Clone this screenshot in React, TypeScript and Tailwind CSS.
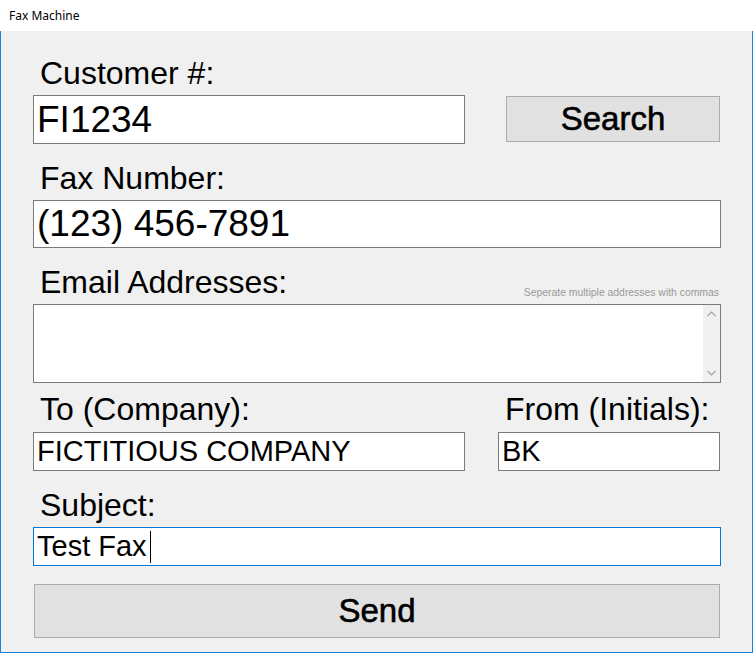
import React from "react";

const F = { fontFamily: '"Liberation Sans", Arial, sans-serif' };

function Label({ children }: { children: React.ReactNode }) {
  return (
    <div className="pl-[7px] text-[32px] leading-[32px] text-black whitespace-nowrap">
      {children}
    </div>
  );
}

export default function App() {
  return (
    <div className="w-[753px] h-[653px] flex flex-col bg-white overflow-hidden" style={F}>
      <div className="h-[31px] shrink-0 bg-white flex items-center pl-[9px]">
        <span className="text-[12px] text-black" style={{ fontFamily: '"Noto Sans", "Open Sans", sans-serif' }}>
          Fax Machine
        </span>
      </div>
      <div className="flex-1 bg-[#f0f0f0] border-l border-r border-b border-[#1883d7] pl-[32px] pr-[31px] flex flex-col">
        <div className="mt-[26px]">
          <Label>Customer #:</Label>
        </div>
        <div className="mt-[6px] flex items-start">
          <div className="w-[432px] h-[49px] bg-white border border-[#7a7a7a] flex items-center pl-[3px] text-[37px] text-black">
            FI1234
          </div>
          <button className="ml-[41px] mt-[1px] w-[214px] h-[46px] bg-[#e1e1e1] border border-[#adadad] flex items-center justify-center text-[33px] [-webkit-text-stroke:0.6px_black] text-black">
            Search
          </button>
        </div>

        <div className="mt-[18px]">
          <Label>Fax Number:</Label>
        </div>
        <div className="mt-[6px] h-[48px] bg-white border border-[#7a7a7a] flex items-center pl-[3px] text-[37px] text-black">
          (123) 456-7891
        </div>

        <div className="mt-[18px] h-[32px] flex justify-between items-start">
          <Label>Email Addresses:</Label>
          <div className="mt-[21px] mr-[2px] text-[10.4px] leading-[12px] text-[#999999] whitespace-nowrap">
            Seperate multiple addresses with commas
          </div>
        </div>
        <div className="mt-[6px] h-[79px] bg-white border border-[#7a7a7a] flex justify-end">
          <div className="w-[17px] h-full bg-[#f0f0f0] flex flex-col justify-between items-center py-[6px]">
            <svg width="9" height="6" viewBox="0 0 9 6">
              <path d="M0.5 5 L4.5 1 L8.5 5" fill="none" stroke="#a3a3a3" strokeWidth="1.2" />
            </svg>
            <svg width="9" height="6" viewBox="0 0 9 6">
              <path d="M0.5 1 L4.5 5 L8.5 1" fill="none" stroke="#a3a3a3" strokeWidth="1.2" />
            </svg>
          </div>
        </div>

        <div className="mt-[10px] flex">
          <div className="w-[432px]">
            <Label>To (Company):</Label>
          </div>
          <div className="ml-[33px] w-[222px]">
            <div className="pl-[7px] text-[32px] leading-[32px] text-black whitespace-nowrap">
              From (Initials):
            </div>
          </div>
        </div>
        <div className="mt-[7px] flex">
          <div className="w-[432px] h-[39px] bg-white border border-[#7a7a7a] flex items-center pl-[3px] text-[29px] text-black whitespace-nowrap">
            FICTITIOUS COMPANY
          </div>
          <div className="ml-[33px] w-[222px] h-[39px] bg-white border border-[#7a7a7a] flex items-center pl-[3px] text-[29px] text-black">
            BK
          </div>
        </div>

        <div className="mt-[18px]">
          <Label>Subject:</Label>
        </div>
        <div className="mt-[6px] h-[39px] bg-white border border-[#0078d7] flex items-center pl-[3px] text-[29px] text-black">
          <span>Test Fax</span>
          <span className="ml-[3px] w-px h-[32px] bg-black" />
        </div>

        <button className="mt-[18px] mx-[1px] h-[54px] bg-[#e1e1e1] border border-[#adadad] flex items-center justify-center text-[33px] [-webkit-text-stroke:0.6px_black] text-black">
          Send
        </button>
      </div>
    </div>
  );
}
